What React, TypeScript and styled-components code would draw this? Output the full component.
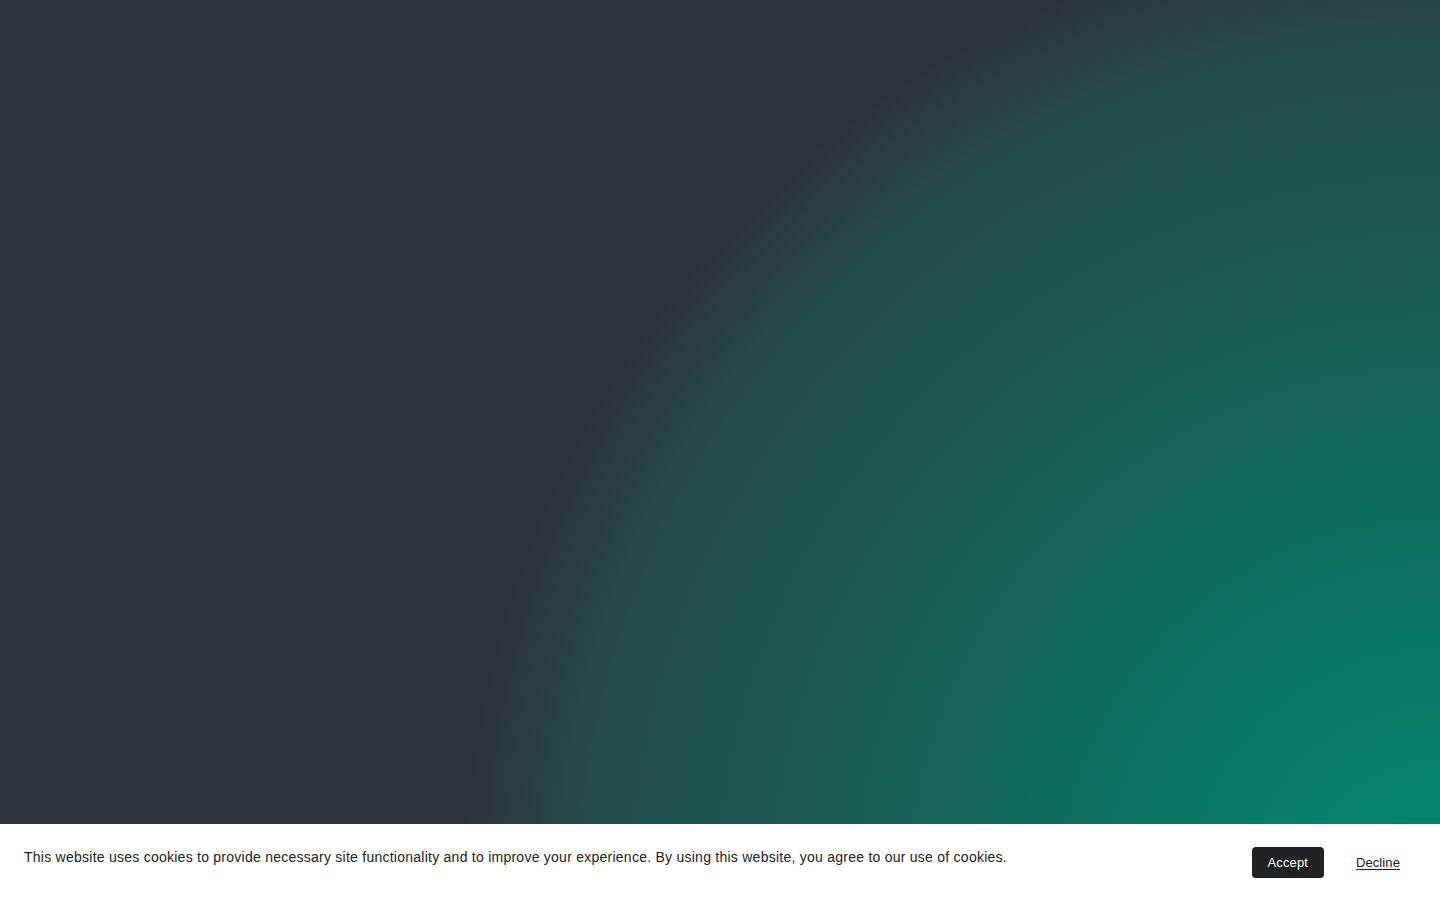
import styled, { createGlobalStyle } from 'styled-components';

const GlobalStyle = createGlobalStyle`
  html, body, #root {
    margin: 0;
    padding: 0;
    height: 100%;
  }
  body {
    font-family: "Liberation Sans", Arial, sans-serif;
    background-color: #2d333b;
  }
`;

const Page = styled.div`
  width: 100%;
  height: 100vh;
  display: flex;
  flex-direction: column;
  justify-content: flex-end;
  background-color: #2d333b;
  background-image: radial-gradient(
    circle 975px at 100% 100%,
    #03856a 0px,
    #05806a 130px,
    #0e6e5e 390px,
    #1b5c52 620px,
    #234b49 860px,
    #2b3d40 935px,
    #2d333b 975px
  );
  overflow: hidden;
`;

const CookieBanner = styled.div`
  display: flex;
  align-items: flex-start;
  justify-content: space-between;
  gap: 24px;
  padding: 23px 24px 22px 24px;
  background-color: #ffffff;
`;

const BannerText = styled.p`
  margin: 0;
  padding-top: 1px;
  font-size: 14px;
  line-height: 18px;
  color: #222222;
  letter-spacing: 0.25px;
`;

const Actions = styled.div`
  display: flex;
  align-items: center;
  gap: 16px;
  flex-shrink: 0;
`;

const Button = styled.button<{ $variant: 'primary' | 'link' }>`
  height: 31px;
  padding: 0 16px;
  border: none;
  border-radius: 4px;
  font-family: "Liberation Sans", Arial, sans-serif;
  font-size: 13px;
  letter-spacing: 0.1px;
  cursor: pointer;
  background-color: ${(p) => (p.$variant === 'primary' ? '#1f2124' : 'transparent')};
  color: ${(p) => (p.$variant === 'primary' ? '#ffffff' : '#222222')};
  text-decoration: ${(p) => (p.$variant === 'link' ? 'underline' : 'none')};
  text-underline-offset: 2px;
`;

export default function App() {
  return (
    <>
      <GlobalStyle />
      <Page>
        <CookieBanner>
          <BannerText>
            This website uses cookies to provide necessary site functionality and to improve your
            experience. By using this website, you agree to our use of cookies.
          </BannerText>
          <Actions>
            <Button $variant="primary">Accept</Button>
            <Button $variant="link">Decline</Button>
          </Actions>
        </CookieBanner>
      </Page>
    </>
  );
}
